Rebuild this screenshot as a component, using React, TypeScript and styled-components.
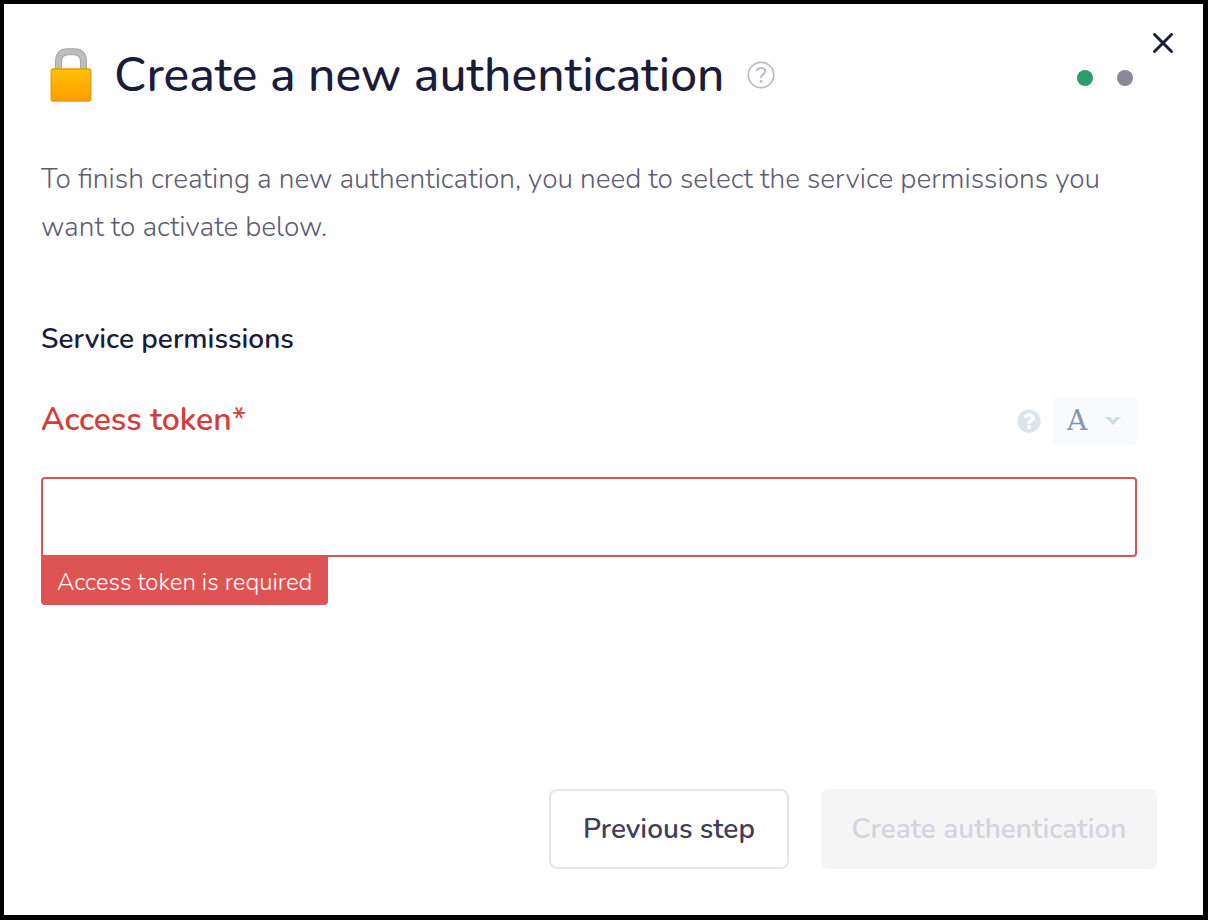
import React, { useState } from 'react';
import styled, { createGlobalStyle } from 'styled-components';
import { FaQuestionCircle } from 'react-icons/fa';

const GlobalStyle = createGlobalStyle`
  *, *::before, *::after { box-sizing: border-box; }
  body {
    margin: 0;
    background: #000000;
    font-family: 'Nunito', 'Nunito Sans', 'Open Sans', sans-serif;
    color: #1b1b3a;
  }
`;

const Backdrop = styled.div`
  display: flex;
  min-height: 100vh;
  padding: 4px 5px 5px 4px;
  background: #000000;
`;

const Dialog = styled.main`
  position: relative;
  display: flex;
  flex: 1;
  flex-direction: column;
  padding: 36px 46px 46px 37px;
  background: #ffffff;
`;

const Header = styled.header`
  display: flex;
  align-items: center;
  height: 70px;
  padding-right: 24px;
`;

const Title = styled.h1`
  margin: 0 22px 0 13px;
  font-size: 48px;
  font-weight: 500;
  line-height: 64px;
  white-space: nowrap;
`;

const IconButton = styled.button`
  display: flex;
  padding: 0;
  border: 0;
  background: none;
  color: inherit;
  cursor: pointer;
`;

const CloseButton = styled(IconButton)`
  position: absolute;
  top: 28px;
  right: 29px;
`;

const Steps = styled.div`
  display: flex;
  gap: 24px;
  margin-left: auto;
  padding-top: 6px;
`;

const Step = styled.span<{ $active?: boolean }>`
  width: 16px;
  height: 16px;
  border-radius: 50%;
  background: ${({ $active }) => ($active ? '#2a9d6b' : '#8a8799')};
`;

const Content = styled.form`
  display: flex;
  flex: 1;
  flex-direction: column;
`;

const Description = styled.p`
  margin: 45px 0 0;
  color: #5f5d75;
  font-size: 28px;
  font-weight: 300;
  line-height: 48px;
`;

const SectionTitle = styled.h2`
  margin: 64px 0 0;
  font-size: 28px;
  font-weight: 600;
  line-height: 48px;
`;

const Field = styled.div`
  margin: 34px 20px 0 0;
`;

const FieldHeader = styled.div`
  display: flex;
  align-items: center;
  gap: 12px;
  height: 48px;
  margin-bottom: 32px;
`;

const Label = styled.label`
  flex: 1;
  padding-bottom: 2px;
  color: #d43d3d;
  font-size: 32px;
  font-weight: 600;
  line-height: 46px;
`;

const RequiredMark = styled.span`
  font-weight: 400;
`;

const TypePicker = styled.div`
  position: relative;
  display: flex;
  width: 84px;
  height: 48px;

  svg {
    position: absolute;
    top: 18px;
    right: 16px;
    pointer-events: none;
  }
`;

const TypeSelect = styled.select`
  width: 100%;
  padding: 0 0 0 14px;
  border: 0;
  border-radius: 4px;
  appearance: none;
  background: #f8fafc;
  color: #8199ae;
  font-family: 'DejaVu Serif', serif;
  font-size: 28px;
  font-weight: 200;
  line-height: 48px;
`;

const TextInput = styled.input`
  display: block;
  width: 100%;
  height: 80px;
  padding: 0 16px;
  border: 2px solid #de5353;
  border-radius: 4px 4px 4px 0;
  outline: none;
  background: #ffffff;
  color: inherit;
  font: inherit;
  font-size: 28px;
`;

const ErrorMessage = styled.p`
  width: fit-content;
  margin: 0;
  padding: 2px 16px 0;
  border-radius: 0 0 4px 4px;
  background: #de5353;
  color: #ffffff;
  font-size: 24px;
  font-weight: 300;
  line-height: 46px;
`;

const Footer = styled.footer`
  display: flex;
  justify-content: flex-end;
  gap: 32px;
  margin-top: auto;
`;

const Button = styled.button<{ $wide?: boolean }>`
  width: ${({ $wide }) => ($wide ? 336 : 240)}px;
  height: 80px;
  padding: 0;
  border: 2px solid #e6e6e6;
  border-radius: 8px;
  background: #ffffff;
  color: #403e5a;
  font-family: inherit;
  font-size: 28px;
  font-weight: 600;
  line-height: 48px;

  &:disabled {
    border-color: #f5f5f5;
    background: #f5f5f5;
    color: #d5d3de;
  }
`;

function Padlock() {
  return (
    <svg width="60" height="60" viewBox="0 0 60 60" aria-hidden="true">
      <defs>
        <linearGradient id="lock-body" x1="0" y1="0" x2="0" y2="1">
          <stop offset="0" stopColor="#ffc107" />
          <stop offset="1" stopColor="#ff9c00" />
        </linearGradient>
      </defs>
      <path d="M17.500 26V17Q17.500 6.700 27 6.700H33Q42.500 6.700 42.500 17V26" fill="none" stroke="#a4a4a4" strokeWidth="7" />
      <path d="M17.500 26V17Q17.500 6.700 27 6.700H33Q42.500 6.700 42.500 17V26" fill="none" stroke="#bdbdbd" strokeWidth="5" />
      <rect x="10.200" y="24" width="39.600" height="32" rx="2" fill="url(#lock-body)" stroke="#e59a10" strokeWidth="1.300" />
    </svg>
  );
}

function HelpIcon() {
  return (
    <svg width="28" height="28" viewBox="0 0 28 28" fill="none" stroke="#bcb9cb" strokeWidth="2" strokeLinecap="round" aria-hidden="true">
      <circle cx="14" cy="14" r="12.700" strokeWidth="1.700" />
      <path d="M9.800 9.300C10.800 7.600 12.300 7 14.200 7C16.800 7 18.300 8.300 18.300 10.300C18.300 13 14 13.200 14 16.300" />
      <circle cx="14" cy="20.200" r="1.500" fill="#bcb9cb" stroke="none" />
    </svg>
  );
}

export default function App() {
  const [token, setToken] = useState('');

  return (
    <>
      <GlobalStyle />
      <Backdrop>
        <Dialog role="dialog" aria-labelledby="dialog-title">
          <Header>
            <Padlock />
            <Title id="dialog-title">Create a new authentication</Title>
            <IconButton type="button" aria-label="Help">
              <HelpIcon />
            </IconButton>
            <Steps role="img" aria-label="Step 1 of 2">
              <Step $active />
              <Step />
            </Steps>
          </Header>
          <CloseButton type="button" aria-label="Close">
            <svg width="22" height="22" viewBox="0 0 22 22" stroke="#1b1b3a" strokeWidth="3" strokeLinecap="round" aria-hidden="true">
              <path d="M2.500 2.500L19.500 19.500M19.500 2.500L2.500 19.500" />
            </svg>
          </CloseButton>
          <Content onSubmit={(event) => event.preventDefault()}>
            <Description>
              To finish creating a new authentication, you need to select the service permissions you want to activate below.
            </Description>
            <SectionTitle>Service permissions</SectionTitle>
            <Field>
              <FieldHeader>
                <Label htmlFor="access-token">
                  Access token<RequiredMark>*</RequiredMark>
                </Label>
                <IconButton type="button" aria-label="About the access token">
                  <FaQuestionCircle size={24} color="#dde3ea" />
                </IconButton>
                <TypePicker>
                  <TypeSelect aria-label="Value type">
                    <option>A</option>
                  </TypeSelect>
                  <svg width="16" height="11" viewBox="0 0 16 11" aria-hidden="true">
                    <path d="M0 2H5L8 5L11 2H16L8 10Z" fill="#d3dce4" />
                  </svg>
                </TypePicker>
              </FieldHeader>
              <TextInput
                id="access-token"
                type="text"
                value={token}
                onChange={(event) => setToken(event.target.value)}
                aria-invalid={!token}
                aria-describedby="access-token-error"
                required
              />
              {!token && <ErrorMessage id="access-token-error">Access token is required</ErrorMessage>}
            </Field>
            <Footer>
              <Button type="button">Previous step</Button>
              <Button type="submit" $wide disabled={!token}>
                Create authentication
              </Button>
            </Footer>
          </Content>
        </Dialog>
      </Backdrop>
    </>
  );
}
